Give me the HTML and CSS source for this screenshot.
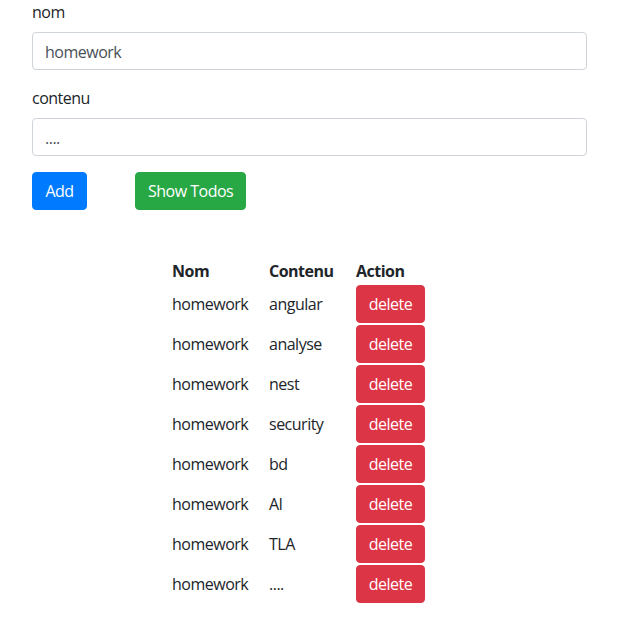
FILE: index.html
```html
<!DOCTYPE html>
<html lang="fr">
<head>
<meta charset="utf-8">
<title>Todos</title>
<link rel="stylesheet" href="styles.css">
</head>
<body>
<div class="container">
  <form class="todo-form">
    <div class="form-group">
      <label class="label" for="nom">nom</label>
      <input class="form-control" id="nom" type="text" value="homework">
    </div>
    <div class="form-group">
      <label class="label" for="contenu">contenu</label>
      <input class="form-control" id="contenu" type="text" value="....">
    </div>
    <div class="actions">
      <button type="button" class="btn btn-primary">Add</button>
      <button type="button" class="btn btn-success">Show Todos</button>
    </div>
  </form>

  <table class="todo-table">
    <thead>
      <tr><th class="col-nom">Nom</th><th class="col-contenu">Contenu</th><th>Action</th></tr>
    </thead>
    <tbody>
      <tr><td>homework</td><td>angular</td><td><button class="btn btn-danger">delete</button></td></tr>
      <tr><td>homework</td><td>analyse</td><td><button class="btn btn-danger">delete</button></td></tr>
      <tr><td>homework</td><td>nest</td><td><button class="btn btn-danger">delete</button></td></tr>
      <tr><td>homework</td><td>security</td><td><button class="btn btn-danger">delete</button></td></tr>
      <tr><td>homework</td><td>bd</td><td><button class="btn btn-danger">delete</button></td></tr>
      <tr><td>homework</td><td>AI</td><td><button class="btn btn-danger">delete</button></td></tr>
      <tr><td>homework</td><td>TLA</td><td><button class="btn btn-danger">delete</button></td></tr>
      <tr><td>homework</td><td>....</td><td><button class="btn btn-danger">delete</button></td></tr>
    </tbody>
  </table>
</div>
</body>
</html>
```

FILE: styles.css
```css
* { box-sizing: border-box; }

html, body {
  margin: 0;
  padding: 0;
  background: #fff;
}

body {
  font-family: "Segoe UI", "Open Sans", "Noto Sans", sans-serif;
  font-size: 16px;
  line-height: 24px;
  letter-spacing: -0.5px;
  color: #212529;
}

.container {
  padding: 0 32px;
}

.form-group {
  margin-bottom: 16px;
}

.label {
  display: block;
  margin-bottom: 8px;
}

.form-control {
  display: block;
  width: 100%;
  height: 38px;
  padding: 7px 12px 5px;
  font: inherit;
  letter-spacing: inherit;
  line-height: 24px;
  color: #495057;
  background: #fff;
  border: 1px solid #ced4da;
  border-radius: 4px;
}

.actions {
  display: flex;
  gap: 48px;
}

.btn {
  display: inline-block;
  height: 38px;
  padding: 6px 12px;
  font: inherit;
  letter-spacing: inherit;
  line-height: 24px;
  color: #fff;
  border: 1px solid transparent;
  border-radius: 4px;
  cursor: pointer;
}

.btn-primary { background: #007bff; border-color: #007bff; min-width: 55px; }
.btn-success { background: #28a745; border-color: #28a745; }
.btn-danger  { background: #dc3545; border-color: #dc3545; width: 69px; padding: 6px 0; }

.todo-table {
  margin: 48px 0 0 140px;
  border-collapse: collapse;
}

.todo-table th,
.todo-table td {
  padding: 1px 0;
  text-align: left;
  vertical-align: middle;
  white-space: nowrap;
}

.todo-table th { font-weight: 700; }

.col-nom { width: 97px; }
.col-contenu { width: 87px; }
```
